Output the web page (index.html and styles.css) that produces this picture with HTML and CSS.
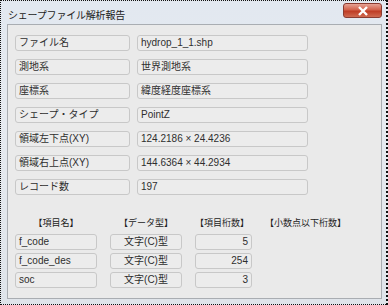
FILE: index.html
```html
<!DOCTYPE html>
<html lang="ja">
<head>
  <meta charset="UTF-8" />
  <title>シェープファイル解析報告</title>
  <link rel="stylesheet" href="styles.css">
</head>
<body>
  <div class="window">
    <div class="titlebar">
      <span class="title">シェープファイル解析報告</span>
      <button class="close-btn" type="button">
        <svg width="12" height="10" viewBox="0 0 12 10">
          <path d="M2 1 L10 9 M10 1 L2 9" stroke="#fff" stroke-width="2.4" fill="none" />
        </svg>
      </button>
    </div>
    <div class="client">
      <div class="info-grid">
        <div class="box">ファイル名</div><div class="box">hydrop_1_1.shp</div>
        <div class="box">測地系</div><div class="box">世界測地系</div>
        <div class="box">座標系</div><div class="box">緯度経度座標系</div>
        <div class="box">シェープ・タイプ</div><div class="box">PointZ</div>
        <div class="box">領域左下点(XY)</div><div class="box">124.2186 × 24.4236</div>
        <div class="box">領域右上点(XY)</div><div class="box">144.6364 × 44.2934</div>
        <div class="box">レコード数</div><div class="box">197</div>
      </div>

      <div class="field-grid">
        <div class="head center">【項目名】</div>
        <div class="head center">【データ型】</div>
        <div class="head">【項目桁数】</div>
        <div class="head">【小数点以下桁数】</div>

        <div class="box">f_code</div>
        <div class="box center">文字(C)型</div>
        <div class="box right">5</div>
        <div></div>

        <div class="box">f_code_des</div>
        <div class="box center">文字(C)型</div>
        <div class="box right">254</div>
        <div></div>

        <div class="box">soc</div>
        <div class="box center">文字(C)型</div>
        <div class="box right">3</div>
        <div></div>
      </div>
    </div>
  </div>
</body>
</html>
```

FILE: styles.css
```css
body {
  margin: 0;
  background: #fff;
  font-family: "Liberation Sans", "Noto Sans CJK JP", sans-serif;
  color: #2e2e2e;
}
.window {
  box-sizing: border-box;
  width: 388px;
  height: 305px;
  border: 1px dotted #111;
  border-right-width: 2px;
  background: linear-gradient(#e2e8f0, #e6eaf0 40%, #dfe4ea);
  padding: 0 4px 5px 6px;
  display: flex;
  flex-direction: column;
}
.titlebar {
  height: 23px;
  display: flex;
  align-items: flex-start;
  justify-content: space-between;
}
.title {
  font-family: "Noto Sans CJK JP", sans-serif;
  font-size: 10px;
  color: #222;
  margin-top: 6px;
  margin-left: 1px;
  letter-spacing: -0.2px;
}
.close-btn {
  width: 39px;
  height: 15px;
  margin-top: 2px;
  padding: 0;
  border: 1px solid #8a3b30;
  border-radius: 3px;
  background: linear-gradient(#e6a294, #d2624c 45%, #bf3c24 55%, #cf6a50);
  display: flex;
  align-items: center;
  justify-content: center;
}
.client {
  flex: 1;
  background: #eaeaea;
  border: 1px solid #a9adb2;
  padding: 10px 8px 0 7px;
}
.info-grid {
  display: grid;
  grid-template-columns: 115px 171px;
  column-gap: 7px;
  row-gap: 8px;
}
.box {
  box-sizing: border-box;
  height: 16px;
  border: 1px solid #c8c8c8;
  border-radius: 3px;
  background: #ececec;
  font-size: 10px;
  line-height: 14px;
  padding: 0 3px;
  white-space: nowrap;
  overflow: hidden;
}
.field-grid {
  margin-top: 21px;
  display: grid;
  grid-template-columns: 82px 72px 57px auto;
  column-gap: 13px;
  row-gap: 3px;
}
.head {
  font-family: "Noto Sans CJK JP", sans-serif;
  font-size: 9px;
  line-height: 13px;
  color: #222;
  white-space: nowrap;
  margin-bottom: 2px;
}
.center {
  text-align: center;
}
.right {
  text-align: right;
}
```
